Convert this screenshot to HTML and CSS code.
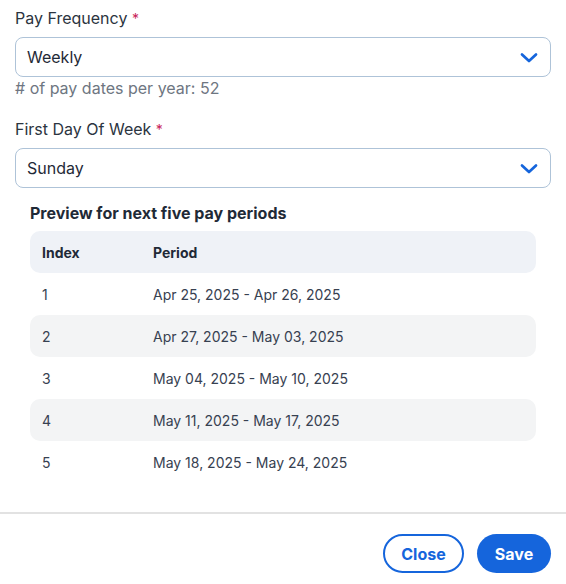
FILE: index.html
```html
<!DOCTYPE html>
<html>
<head>
<meta charset="utf-8">
<link rel="stylesheet" href="styles.css">
</head>
<body>
<div class="modal">
  <div class="content">
    <div class="field">
      <label class="label">Pay Frequency <span class="req">*</span></label>
      <div class="select"><span>Weekly</span>
        <svg class="chev" width="18" height="11" viewBox="0 0 18 11"><path d="M2 2.5 L9 9 L16 2.5" fill="none" stroke="#1565dc" stroke-width="2.7" stroke-linecap="round" stroke-linejoin="round"/></svg>
      </div>
      <div class="help"># of pay dates per year: 52</div>
    </div>
    <div class="field second">
      <label class="label">First Day Of Week <span class="req">*</span></label>
      <div class="select"><span>Sunday</span>
        <svg class="chev" width="18" height="11" viewBox="0 0 18 11"><path d="M2 2.5 L9 9 L16 2.5" fill="none" stroke="#1565dc" stroke-width="2.7" stroke-linecap="round" stroke-linejoin="round"/></svg>
      </div>
    </div>
    <div class="preview">
      <div class="preview-title">Preview for next five pay periods</div>
      <div class="table">
        <div class="row head"><div class="c1">Index</div><div class="c2">Period</div></div>
        <div class="row"><div class="c1">1</div><div class="c2">Apr 25, 2025 - Apr 26, 2025</div></div>
        <div class="row alt"><div class="c1">2</div><div class="c2">Apr 27, 2025 - May 03, 2025</div></div>
        <div class="row"><div class="c1">3</div><div class="c2">May 04, 2025 - May 10, 2025</div></div>
        <div class="row alt"><div class="c1">4</div><div class="c2">May 11, 2025 - May 17, 2025</div></div>
        <div class="row"><div class="c1">5</div><div class="c2">May 18, 2025 - May 24, 2025</div></div>
      </div>
    </div>
  </div>
  <div class="footer">
    <button class="btn outline">Close</button>
    <button class="btn primary">Save</button>
  </div>
</div>
</body>
</html>
```

FILE: styles.css
```css
html, body {
  margin: 0;
  padding: 0;
  background: #ffffff;
}
body {
  font-family: Inter, "Noto Sans", sans-serif;
  color: #1f2a37;
}
.modal {
  width: 566px;
}
.content {
  padding: 8px 15px 0 15px;
  height: 512px;
  box-sizing: border-box;
}
.label {
  display: block;
  font-size: 16px;
  line-height: 20px;
  color: #2b3440;
  margin-bottom: 8px;
}
.req {
  color: #c8245a;
  font-size: 14px;
}
.select {
  height: 40px;
  box-sizing: border-box;
  border: 1px solid #aec3d8;
  border-radius: 8px;
  display: flex;
  align-items: center;
  justify-content: space-between;
  padding: 0 12px 0 11px;
  font-size: 16px;
  color: #1f2a37;
}
.chev {
  display: block;
}
.help {
  margin-top: 1px;
  font-size: 16px;
  line-height: 20px;
  color: #6e7681;
}
.second {
  margin-top: 21px;
}
.preview {
  padding: 0 15px;
  margin-top: 15px;
}
.preview-title {
  font-weight: 700;
  font-size: 16px;
  line-height: 20px;
  color: #1f2a37;
  margin-bottom: 8px;
}
.row {
  display: flex;
  align-items: center;
  height: 42px;
  font-size: 14px;
  color: #374151;
  border-radius: 10px;
}
.row.head {
  background: #eff2f7;
  font-weight: 700;
  color: #1f2a37;
}
.row.alt {
  background: #f3f4f5;
}
.c1 {
  width: 123px;
  padding-left: 12px;
  box-sizing: border-box;
}
.c2 {
  flex: 1;
}
.footer {
  border-top: 2px solid #e2e2e2;
  display: flex;
  justify-content: flex-end;
  gap: 13px;
  padding: 20px 15px 0 0;
}
.btn {
  height: 39px;
  border-radius: 20px;
  font-family: Inter, "Noto Sans", sans-serif;
  font-weight: 700;
  font-size: 16px;
  box-sizing: border-box;
  cursor: pointer;
}
.btn.outline {
  width: 81px;
  background: #fff;
  border: 2px solid #1565dc;
  color: #1565dc;
}
.btn.primary {
  width: 74px;
  background: #1565dc;
  border: none;
  color: #fff;
}
```
